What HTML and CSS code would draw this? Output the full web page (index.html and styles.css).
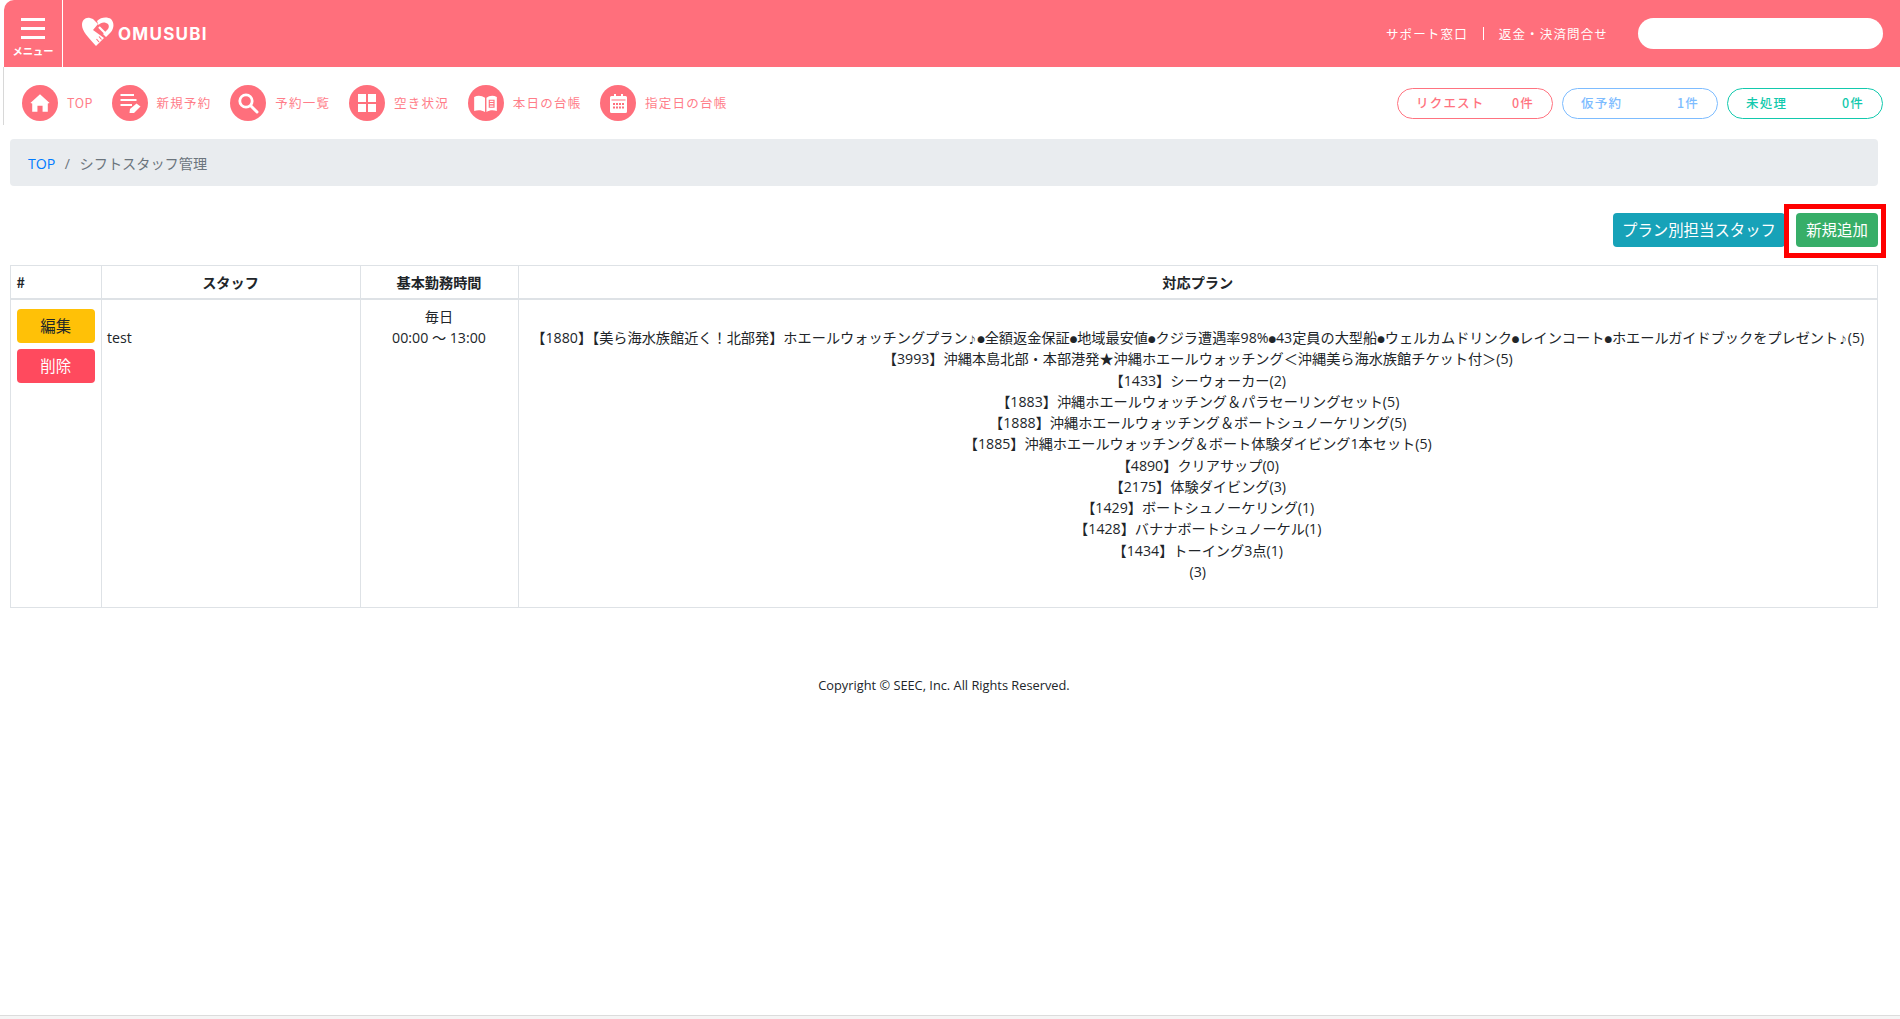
FILE: index.html
```html
<!DOCTYPE html>
<html lang="ja">
<head>
<meta charset="utf-8">
<title>シフトスタッフ管理</title>
<link rel="stylesheet" href="styles.css">
</head>
<body>
<div class="page">
  <div class="top">
    <header class="header">
      <div class="menu">
        <div class="burger"><i></i><i></i><i></i></div>
        <div class="menu-label">メニュー</div>
      </div>
      <div class="brand">
        <svg class="logo" viewBox="0 0 32 30" width="32" height="30">
          <path fill="#fff" d="M8 1 C3.500 0 0 3 0 8 C0 14 6 20 14 29 L16 27 L22 21 L11 13 L16 7 L11 2 Z"/>
          <path fill="#fff" d="M15 4 C19 0 25 -0.500 29 2 C32.500 6 32 11 29 15 L24 20 L21 17 L26 12 C27.500 9.500 27 7 24 6 C21 5 18.500 6 16.500 8 Z"/>
          <path fill="none" stroke="#fff" stroke-width="2.200" d="M17 10 L24 17"/>
          <path stroke="#ff6f7c" stroke-width="1.100" fill="none" d="M14.500 22 L17 25 M17 19.500 L19.500 22.500 M19.500 17 L22 20"/>
        </svg>
        <span class="brand-name">OMUSUBI</span>
      </div>
      <nav class="links">
        <a>サポート窓口</a>
        <span class="sep"></span>
        <a>返金・決済問合せ</a>
      </nav>
      <div class="search"></div>
    </header>
    <div class="subnav">
      <ul class="nav">
        <li class="nav-item">
          <span class="circle"><svg viewBox="0 0 24 24" width="22" height="22"><path fill="#fff" d="M12 2.500 L22.500 12 L20.500 12.500 V21.500 H14.800 V15 H9.200 V21.500 H3.500 V12.500 L1.500 12 Z"/></svg></span>
          <span class="latin">TOP</span>
        </li>
        <li class="nav-item">
          <span class="circle"><svg viewBox="0 0 24 24" width="24" height="24"><path fill="#fff" d="M2.500 3 H16 V5 H2.500 Z M2.500 8 H18.500 V10 H2.500 Z M2.500 13 H14 V15 H2.500 Z"/><path fill="#fff" d="M18.500 12.500 L22.500 15.500 L16 22 L11.500 22 L12 18 Z"/></svg></span>
          <span>新規予約</span>
        </li>
        <li class="nav-item">
          <span class="circle"><svg viewBox="0 0 24 24" width="24" height="24"><circle cx="10" cy="10" r="6.200" fill="none" stroke="#fff" stroke-width="2.800"/><path stroke="#fff" stroke-width="3" stroke-linecap="round" d="M15 15 L21 21"/></svg></span>
          <span>予約一覧</span>
        </li>
        <li class="nav-item">
          <span class="circle"><svg viewBox="0 0 18 18" width="18" height="18"><path fill="#fff" d="M0 0 H8 V8 H0 Z M10 0 H18 V8 H10 Z M0 10 H8 V18 H0 Z M10 10 H18 V18 H10 Z"/></svg></span>
          <span>空き状況</span>
        </li>
        <li class="nav-item">
          <span class="circle"><svg viewBox="0 0 24 18" width="23" height="17"><path fill="#fff" d="M0 2 C4 0 8 0.500 11.500 3 V18 C8 16 4 15.500 0 17 Z"/><path fill="#fff" d="M13 3 C16 0.500 20 0 24 2 V17 C20 15.500 16 16 13 18 Z"/><path fill="none" stroke="#ff6f7c" stroke-width="1.200" d="M16 5.500 H21 V13 H16 Z M16 8 H21 M16 10.500 H21"/></svg></span>
          <span>本日の台帳</span>
        </li>
        <li class="nav-item">
          <span class="circle"><svg viewBox="0 0 17 19" width="17" height="19"><path fill="#fff" d="M1.500 2 H4 V0 H6 V2 H11 V0 H13 V2 H15.500 Q17 2 17 3.500 V17.500 Q17 19 15.500 19 H1.500 Q0 19 0 17.500 V3.500 Q0 2 1.500 2 Z"/><path fill="#ff6f7c" d="M1.500 5.500 H15.500 V6.500 H1.500 Z M3 9 H5 V11 H3 Z M6 9 H8 V11 H6 Z M9 9 H11 V11 H9 Z M12 9 H14 V11 H12 Z M3 12.500 H5 V14.500 H3 Z M6 12.500 H8 V14.500 H6 Z M9 12.500 H11 V14.500 H9 Z M12 12.500 H14 V14.500 H12 Z"/></svg></span>
          <span>指定日の台帳</span>
        </li>
      </ul>
      <div class="pills">
        <div class="pill pill-red"><span>リクエスト</span><span>0件</span></div>
        <div class="pill pill-blue"><span>仮予約</span><span>1件</span></div>
        <div class="pill pill-teal"><span>未処理</span><span>0件</span></div>
      </div>
    </div>
  </div>

  <main class="main">
    <ol class="breadcrumb">
      <li><a class="crumb-link">TOP</a></li>
      <li class="crumb-sep">/</li>
      <li class="crumb-current">シフトスタッフ管理</li>
    </ol>

    <div class="actions">
      <a class="btn btn-info">プラン別担当スタッフ</a>
      <span class="highlighted">
        <a class="btn btn-success">新規追加</a>
        <span class="red-frame"></span>
      </span>
    </div>

    <table class="table">
      <colgroup>
        <col class="col-a"><col class="col-b"><col class="col-c"><col>
      </colgroup>
      <thead>
        <tr>
          <th class="left">#</th>
          <th>スタッフ</th>
          <th>基本勤務時間</th>
          <th>対応プラン</th>
        </tr>
      </thead>
      <tbody>
        <tr>
          <td class="ops">
            <a class="btn btn-warning">編集</a>
            <a class="btn btn-danger">削除</a>
          </td>
          <td class="left"><br>test</td>
          <td>毎日<br>00:00 〜 13:00</td>
          <td><br>【1880】【美ら海水族館近く！北部発】ホエールウォッチングプラン<span class="note">♪</span><span class="mark">●</span>全額返金保証<span class="mark">●</span>地域最安値<span class="mark">●</span>クジラ遭遇率98%<span class="mark">●</span>43定員の大型船<span class="mark">●</span>ウェルカムドリンク<span class="mark">●</span>レインコート<span class="mark">●</span>ホエールガイドブックをプレゼント<span class="note">♪</span>(5)<br>
          【3993】沖縄本島北部・本部港発★沖縄ホエールウォッチング＜沖縄美ら海水族館チケット付＞(5)<br>
          【1433】シーウォーカー(2)<br>
          【1883】沖縄ホエールウォッチング＆パラセーリングセット(5)<br>
          【1888】沖縄ホエールウォッチング＆ボートシュノーケリング(5)<br>
          【1885】沖縄ホエールウォッチング＆ボート体験ダイビング1本セット(5)<br>
          【4890】クリアサップ(0)<br>
          【2175】体験ダイビング(3)<br>
          【1429】ボートシュノーケリング(1)<br>
          【1428】バナナボートシュノーケル(1)<br>
          【1434】トーイング3点(1)<br>
          (3)<br>&nbsp;</td>
        </tr>
      </tbody>
    </table>

    <footer class="copyright">Copyright © SEEC, Inc. All Rights Reserved.</footer>
  </main>
  <div class="bottom-bar"></div>
</div>
</body>
</html>
```
FILE: styles.css
```css
* { box-sizing: border-box; }
html, body { margin: 0; height: 100%; overflow: hidden; }
body {
  font-family: "Open Sans", "Noto Sans CJK JP", sans-serif;
  font-size: 14.18px;
  line-height: 21.27px;
  color: #212529;
  background: #fff;
}
.page { height: 1019px; display: flex; flex-direction: column; }

/* top band */
.top { margin-left: 3px; }
.header {
  height: 67px;
  margin-left: 1px;
  background: #ff6f7c;
  border-top-left-radius: 10px;
  display: flex;
  align-items: center;
  color: #fff;
  font-family: "Noto Sans CJK JP", sans-serif;
}
.menu {
  width: 59px;
  height: 67px;
  border-right: 1px solid #fff;
  padding-top: 18px;
  display: flex;
  flex-direction: column;
  align-items: center;
}
.burger { width: 24px; display: flex; flex-direction: column; gap: 6px; }
.burger i { display: block; height: 3px; background: #fff; }
.menu-label { font-size: 10.3px; line-height: 12px; font-weight: 700; margin-top: 6px; white-space: nowrap; }
.brand { display: flex; align-items: center; margin-left: 19px; gap: 5px; }
.logo { display: block; margin-top: -3px; }
.brand-name {
  font-family: "Inter", sans-serif;
  font-weight: 700;
  font-size: 17px;
  letter-spacing: 1.25px;
  line-height: 20px;
  margin-left: -1px;
}
.links { margin-left: auto; display: flex; align-items: center; font-size: 12.5px; letter-spacing: 1.15px; margin-right: 30px; }
.sep { width: 1px; height: 13px; background: #fff; margin: 0 15px; }
.search { width: 245px; height: 31px; background: #fff; border-radius: 16px; margin-right: 17px; }

.subnav {
  height: 58px;
  padding-top: 14px;
  border-left: 1px solid #d8d8d8;
  display: flex;
  align-items: center;
  justify-content: space-between;
  padding-right: 17px;
}
.nav {
  list-style: none;
  margin: 0;
  padding: 0 0 0 18px;
  display: flex;
  gap: 18.7px;
}
.nav-item {
  display: flex;
  align-items: center;
  gap: 9px;
  color: #ff7d89;
  font-family: "Noto Sans CJK JP", sans-serif;
  font-size: 12.5px;
  letter-spacing: 1.25px;
}
.latin { letter-spacing: 0.5px; }
.circle {
  width: 36px;
  height: 36px;
  border-radius: 50%;
  background: #ff6f7c;
  display: flex;
  align-items: center;
  justify-content: center;
}
.circle svg { display: block; }
.pills { display: flex; gap: 9px; }
.pill {
  width: 156px;
  height: 31px;
  border: 1px solid;
  border-radius: 16px;
  background: #fff;
  display: flex;
  align-items: center;
  justify-content: space-between;
  padding: 0 18px;
  font-family: "Noto Sans CJK JP", sans-serif;
  font-size: 12.5px;
  font-weight: 500;
  letter-spacing: 1.2px;
}
.pill-red { color: #ff7380; border-color: #ff7380; }
.pill-blue { color: #7dbcff; border-color: #7dbcff; }
.pill-teal { color: #12c9ad; border-color: #12c9ad; }

/* content */
.main { flex: 1; padding: 14px 22px 0 10px; display: flex; flex-direction: column; }
.breadcrumb {
  list-style: none;
  margin: 0;
  height: 47px;
  background: #e9ecef;
  border-radius: 4px;
  padding: 0 18px;
  display: flex;
  align-items: center;
  gap: 9.5px;
  color: #6c757d;
}
.breadcrumb li { position: relative; top: 1px; }
.actions { display: flex; justify-content: flex-end; margin-top: 27px; }
.crumb-link { color: #007bff; }
.highlighted { position: relative; margin-left: 11px; display: flex; }
.red-frame {
  position: absolute;
  left: -12px;
  top: -9px;
  right: -8px;
  bottom: -11px;
  border: 5px solid #f00;
  pointer-events: none;
}
.btn {
  display: block;
  height: 34px;
  border-radius: 4px;
  font-family: "Noto Sans CJK JP", sans-serif;
  font-size: 15.4px;
  line-height: 33px;
  text-align: center;
  padding: 0 9px;
}
.btn-info { background: #17a2b8; color: #fff; width: 172px; }
.btn-success { background: #37ae68; color: #fff; width: 82px; }
.btn-warning { background: #ffc107; color: #212529; }
.btn-danger { background: #ff4a5e; color: #fff; margin-top: 6px; }

.table {
  width: 100%;
  margin-top: 18px;
  border-collapse: collapse;
  table-layout: fixed;
}
.col-a { width: 90.5px; }
.col-b { width: 259px; }
.col-c { width: 158px; }
.table th, .table td { border: 1px solid #dee2e6; text-align: center; vertical-align: top; }
.table th {
  border-bottom-width: 2px;
  font-family: "Noto Sans CJK JP", sans-serif;
  font-size: 14.18px;
  font-weight: 700;
  padding: 6px 5.5px 5px;
}
.table td { padding: 5.5px 5.5px 4px; }
.table td.ops { padding: 9px 5.5px 0; }
.table .left { text-align: left; }
.mark { font-size: 7.5px; line-height: 0; }
.note { font-size: 9.5px; line-height: 0; }

.copyright { margin-top: 67px; text-align: center; font-size: 12.8px; line-height: 20px; }
.bottom-bar { height: 4px; border-top: 1px solid #dcdcdc; background: #f5f5f5; }
```
